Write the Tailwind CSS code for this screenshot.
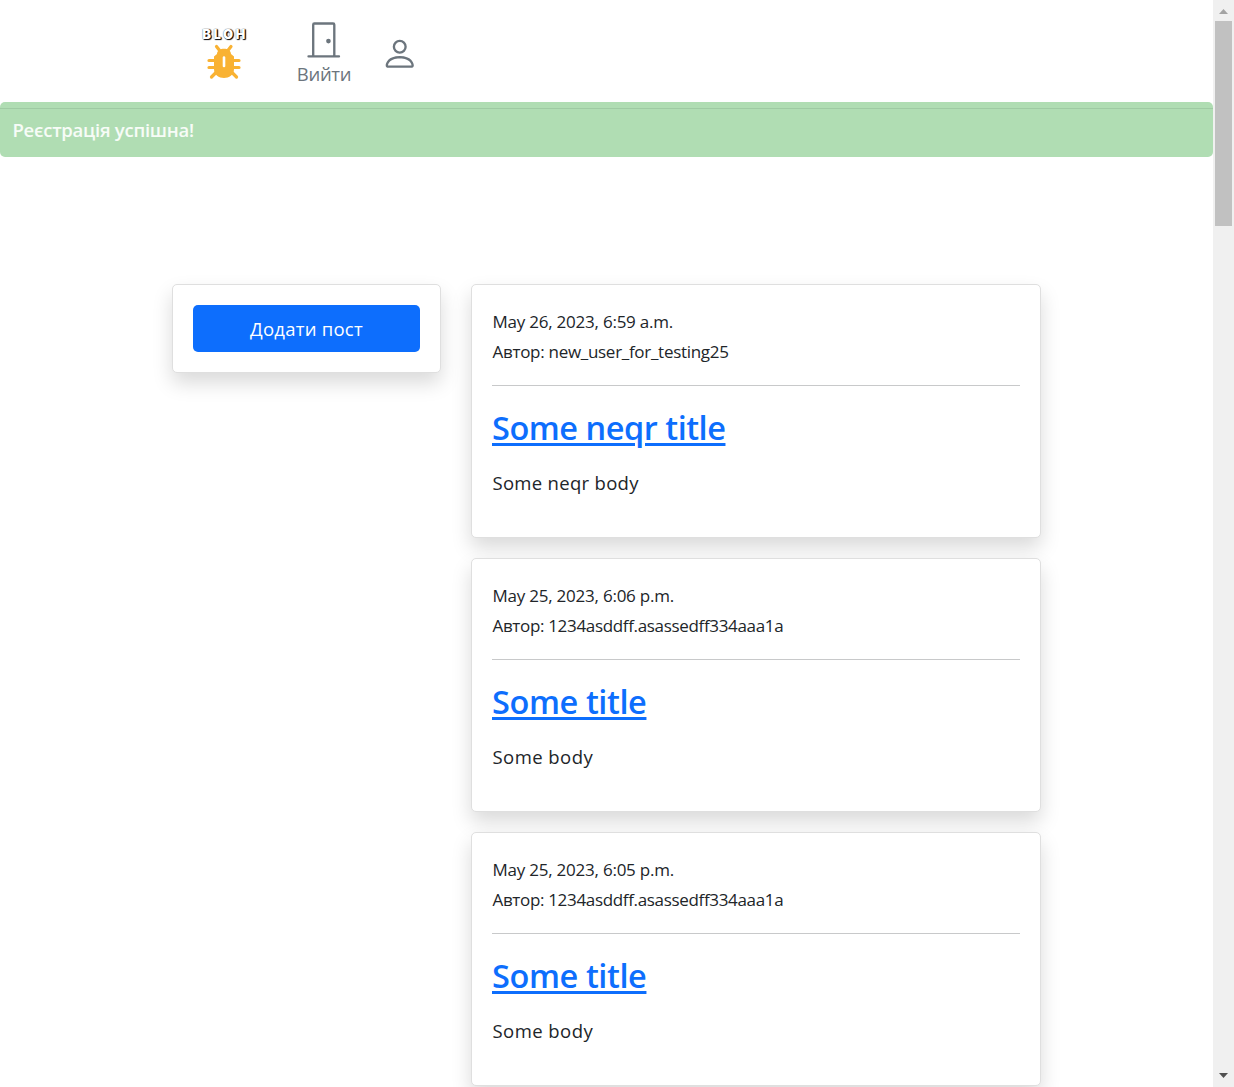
<!DOCTYPE html>
<html lang="uk">
<head>
<meta charset="utf-8">
<title>BLOH</title>
<script src="https://cdn.jsdelivr.net/npm/@tailwindcss/browser@4"></script>
</head>
<body class="flex h-[1087px] overflow-hidden bg-white font-['Open_Sans','Noto_Sans',sans-serif] text-[#212529]">
<div class="h-full w-[1213px] overflow-hidden">
  <header class="flex h-[102px] pl-[200px]">
    <a class="flex w-[48px] flex-col items-center pt-[26px]">
      <span class="h-[17px] pl-[2px] font-['Inter',sans-serif] text-[13px] leading-[16px] font-black tracking-[2.5px] text-white [text-shadow:1px_1px_1px_#000,1px_0_1px_#222,0_0_1px_#555]">BLOH</span>
      <svg class="mt-[1px] h-[36px] w-[34px]" viewBox="0 0 34 36" fill="none" stroke="#f9b233" stroke-width="3.2" stroke-linecap="round">
        <path d="M9.500 2.500 13 7M24 2.500 20.500 7M2 16.500h6M26 16.500h6M2 23.500h6M26 23.500h6M4.500 33 9 28.500M29.500 33 25 28.500"/>
        <path d="M10 10C10 3 24 3 24 10L27 12.500V25C27 37 7 37 7 25V12.500Z" fill="#f9b233" stroke="none"/>
        <path d="M17 13.500v8.500" stroke="#fff" stroke-width="2.600"/>
      </svg>
    </a>
    <a class="ml-[48px] flex w-[56px] flex-col items-center pt-[20px] text-[#6c757d]">
      <svg class="size-[37.5px]" viewBox="0 0 16 16" fill="currentColor"><path d="M3 2a1 1 0 0 1 1-1h8a1 1 0 0 1 1 1v13h1.500a.5.5 0 0 1 0 1h-13a.5.5 0 0 1 0-1H3V2zm1 13h8V2H4v13z"/><path d="M9 9a1 1 0 1 0 2 0 1 1 0 0 0-2 0z"/></svg>
      <span class="pt-[1px] text-[18.500px] leading-[30px] tracking-[-0.3px]">Вийти</span>
    </a>
    <a class="ml-[29px] pt-[35px] text-[#6c757d]">
      <svg class="size-[37.5px]" viewBox="0 0 16 16" fill="currentColor"><path d="M8 8a3 3 0 1 0 0-6 3 3 0 0 0 0 6zm2-3a2 2 0 1 1-4 0 2 2 0 0 1 4 0zm4 8c0 1-1 1-1 1H3s-1 0-1-1 1-4 6-4 6 3 6 4zm-1-.004c-.001-.246-.154-.986-.832-1.664C11.516 10.680 10.289 10 8 10c-2.290 0-3.516.680-4.168 1.332-.678.678-.830 1.418-.832 1.664h10z"/></svg>
    </a>
  </header>
  <div class="h-[55px] rounded-[5px] bg-[#b0ddb3] pt-[6px]">
    <div class="h-px bg-[#9fcaa3]"></div>
    <p class="pt-[6px] pl-[12.5px] text-[18.500px] leading-[30px] font-semibold tracking-[-0.25px] text-white/90">Реєстрація успішна!</p>
  </div>
  <main class="mt-[127px] flex items-start gap-[30px] pl-[172px]">
    <aside class="h-[89px] w-[269px] rounded-[5px] border border-[#dfdfdf] bg-white p-[20px] shadow-[0_10px_20px_rgba(0,0,0,0.15)]">
      <button class="block h-[47px] w-full rounded-[5px] bg-[#0d6efd] text-[18.500px] leading-[47px] tracking-[0.25px] text-white">Додати пост</button>
    </aside>
    <section class="flex w-[570px] flex-col gap-[20px]">
      <article class="h-[254px] rounded-[5px] border border-[#dfdfdf] bg-white px-[20px] pt-[22px] shadow-[0_10px_20px_rgba(0,0,0,0.15)]">
        <p class="pl-[0.5px] text-[17px] leading-[30px] tracking-[-0.23px]">May 26, 2023, 6:59 a.m.</p>
        <p class="pl-[0.5px] text-[17px] leading-[30px] tracking-[-0.29px]">Автор: new_user_for_testing25</p>
        <div class="mt-[18px] h-px bg-[#c8c9ca]"></div>
        <h2 class="mt-[21px] text-[32.500px] leading-[42px] font-semibold tracking-[-0.47px] text-[#0d6efd] underline decoration-[3px] underline-offset-[3px]">Some neqr title</h2>
        <p class="mt-[19px] pl-[0.5px] text-[18.500px] leading-[30px] tracking-[0.3px]">Some neqr body</p>
      </article>
      <article class="h-[254px] rounded-[5px] border border-[#dfdfdf] bg-white px-[20px] pt-[22px] shadow-[0_10px_20px_rgba(0,0,0,0.15)]">
        <p class="pl-[0.5px] text-[17px] leading-[30px] tracking-[-0.23px]">May 25, 2023, 6:06 p.m.</p>
        <p class="pl-[0.5px] text-[17px] leading-[30px] tracking-[-0.33px]">Автор: 1234asddff.asassedff334aaa1a</p>
        <div class="mt-[18px] h-px bg-[#c8c9ca]"></div>
        <h2 class="mt-[21px] text-[32.500px] leading-[42px] font-semibold tracking-[-0.4px] text-[#0d6efd] underline decoration-[3px] underline-offset-[3px]">Some title</h2>
        <p class="mt-[19px] pl-[0.5px] text-[18.500px] leading-[30px] tracking-[0.45px]">Some body</p>
      </article>
      <article class="h-[254px] rounded-[5px] border border-[#dfdfdf] bg-white px-[20px] pt-[22px] shadow-[0_10px_20px_rgba(0,0,0,0.15)]">
        <p class="pl-[0.5px] text-[17px] leading-[30px] tracking-[-0.23px]">May 25, 2023, 6:05 p.m.</p>
        <p class="pl-[0.5px] text-[17px] leading-[30px] tracking-[-0.33px]">Автор: 1234asddff.asassedff334aaa1a</p>
        <div class="mt-[18px] h-px bg-[#c8c9ca]"></div>
        <h2 class="mt-[21px] text-[32.500px] leading-[42px] font-semibold tracking-[-0.4px] text-[#0d6efd] underline decoration-[3px] underline-offset-[3px]">Some title</h2>
        <p class="mt-[19px] pl-[0.5px] text-[18.500px] leading-[30px] tracking-[0.45px]">Some body</p>
      </article>
    </section>
  </main>
</div>
<div class="flex h-full w-[21px] flex-col items-center bg-[#f0f0f0]">
  <svg class="h-[21px] w-[21px] shrink-0" viewBox="0 0 21 21"><path d="M6 14 10.500 9 15 14Z" fill="#a3a3a3"/></svg>
  <div class="h-[205px] w-[17px] bg-[#c1c1c1]"></div>
  <svg class="mt-auto h-[21px] w-[21px] shrink-0" viewBox="0 0 21 21"><path d="M6 7 10.500 12 15 7Z" fill="#505050"/></svg>
</div>
</body>
</html>
